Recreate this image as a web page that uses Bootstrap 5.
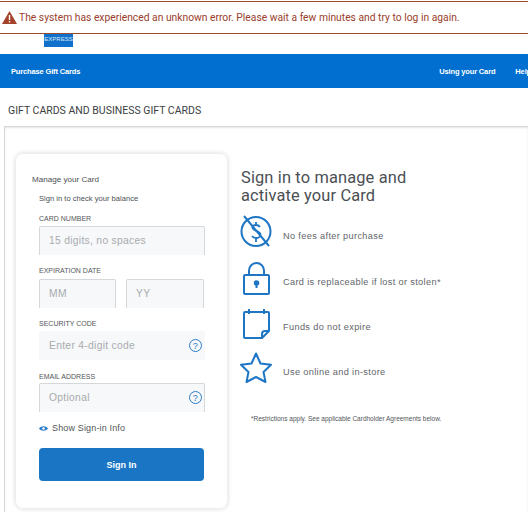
<!DOCTYPE html>
<html lang="en">
<head>
    <meta charset="UTF-8">
    <title>Gift Cards</title>
    <link href="https://cdn.jsdelivr.net/npm/bootstrap@5.3.0/dist/css/bootstrap.min.css" rel="stylesheet">
    <style>
        html, body { height: 512px; overflow: hidden; }
        body { font-family: "Open Sans", "Liberation Sans", sans-serif; background: #fff; color: #53565a; }
        .err-bar {
            margin-top: 1px; height: 33px; padding-left: 2px;
            border-top: 1px solid #9c4a2c; border-bottom: 1px solid #9c4a2c;
            color: #9a3d2c; font-family: Roboto, sans-serif; font-size: 10.3px; gap: 2px; white-space: nowrap;
        }
        .logo-strip { height: 20px; padding-left: 44px; }
        .logo-box {
            width: 29px; height: 13px; background: #0f71cc; color: #dce9f7;
            font: 6px/1 "Liberation Sans", sans-serif; text-align: center; padding-top: 2px;
        }
        .blue-nav {
            height: 34px; background: #006fcf; color: #fff; padding-left: 11px;
            font: 700 7.5px "Liberation Sans", sans-serif; white-space: nowrap; letter-spacing: -.15px;
        }
        .blue-nav .nav-right { gap: 20px; margin-right: -3px; }
        .page-title { height: 38px; padding: 16px 0 0 8px; font: 10.5px/14px Roboto, sans-serif; color: #3c4043; }
        .outer-panel {
            height: 386px; margin-left: 4px; padding: 26px 0 0 10px; gap: 12px;
            border-top: 1px solid #d8d8d8; border-left: 1px solid #d8d8d8;
            box-shadow: inset 0 1px 2px rgba(0,0,0,.1);
        }
        .login-box {
            width: 213px; height: 356px; flex: none; padding: 21px 23px 0 23px;
            border: 1px solid #eee; border-radius: 8px; box-shadow: 0 0 4px rgba(0,0,0,.14);
            font-family: "Liberation Sans", sans-serif;
        }
        .box-lead { font-size: 8.1px; line-height: 10px; margin-left: -7px; color: #4b4f54; }
        .box-sub { font-size: 7.6px; line-height: 10px; margin-top: 9px; color: #4b4f54; }
        .fld-label { display: block; margin: 0 0 3px; font-size: 7px; line-height: 9px; color: #53565a; text-transform: uppercase; }
        .fld {
            position: relative; height: 29px; background: #f7f8f9; border: 1px solid #d5d8da; border-bottom: 0;
            border-radius: 2px 2px 0 0; padding: 0 9px; font: 10.3px/28px "Liberation Sans", sans-serif; color: #a7abae;
            letter-spacing: .3px;
        }
        .fld-flat { border-color: #f7f8f9; }
        .date-row { gap: 10px; }
        .q-icon { position: absolute; right: 1px; top: 6px; width: 15px; height: 15px; }
        .show-info { margin-top: 10px; font-size: 9px; line-height: 12px; gap: 4px; color: #53565a; letter-spacing: .15px; }
        .signin-btn {
            display: block; width: 165px; height: 33px; margin-top: 14px; padding: 0; border: 0; border-radius: 4px;
            background: #1a76c5; color: #fff; font: 700 9px "Liberation Sans", sans-serif;
        }
        .info-col { padding-top: 16px; width: 270px; }
        .info-head { font: 400 16.400px/18px Roboto, sans-serif; margin: 0 0 10px 1px; color: #4b4f54; letter-spacing: .15px; width: 190px; }
        .info-row { gap: 11px; font: 9.2px "Liberation Sans", sans-serif; letter-spacing: .35px; color: #62666a; }
        .info-row svg { flex: none; }
        .foot-note { margin: 32px 0 0 11px; font: 6.500px/8px "Liberation Sans", sans-serif; color: #53565a; white-space: nowrap; }
    </style>
</head>
<body>
    <!-- error message -->
    <div class="err-bar d-flex align-items-center">
        <svg width="15" height="13" viewBox="0 0 15 13"><path d="M7.5 0 15 13H0Z" fill="#a5432a"/><rect x="6.8" y="4" width="1.4" height="5" fill="#fff"/><rect x="6.8" y="10" width="1.4" height="1.4" fill="#fff"/></svg>
        <span>The system has experienced an unknown error. Please wait a few minutes and try to log in again.</span>
    </div>

    <div class="logo-strip"><div class="logo-box">EXPRESS</div></div>

    <nav class="blue-nav d-flex align-items-center justify-content-between">
        <span>Purchase Gift Cards</span>
        <div class="nav-right d-flex"><span>Using your Card</span><span>Help</span></div>
    </nav>

    <div class="page-title">GIFT CARDS AND BUSINESS GIFT CARDS</div>

    <div class="outer-panel d-flex">
        <form class="login-box">
            <div class="box-lead">Manage your Card</div>
            <div class="box-sub">Sign in to check your balance</div>

            <label class="fld-label" style="margin-top:10px">Card Number</label>
            <div class="fld" style="width:166px">15 digits, no spaces</div>

            <label class="fld-label" style="margin:11px 0 4px">Expiration Date</label>
            <div class="d-flex date-row">
                <div class="fld" style="width:77px">MM</div>
                <div class="fld" style="width:78px">YY</div>
            </div>

            <label class="fld-label" style="margin-top:11px">Security Code</label>
            <div class="fld fld-flat" style="width:166px">Enter 4-digit code
                <svg class="q-icon" viewBox="0 0 15 15"><circle cx="7.5" cy="7.5" r="6" fill="none" stroke="#2a7bc8" stroke-width="1"/><text x="7.5" y="10.5" text-anchor="middle" font-size="9" fill="#2a7bc8">?</text></svg>
            </div>

            <label class="fld-label" style="margin:12px 0 2px">Email Address</label>
            <div class="fld" style="width:166px">Optional
                <svg class="q-icon" viewBox="0 0 15 15"><circle cx="7.5" cy="7.5" r="6" fill="none" stroke="#2a7bc8" stroke-width="1"/><text x="7.5" y="10.5" text-anchor="middle" font-size="9" fill="#2a7bc8">?</text></svg>
            </div>

            <div class="show-info d-flex align-items-center">
                <svg width="9" height="7" viewBox="0 0 9 7"><path d="M0 3.5C2 .5 7 .5 9 3.5 7 6.5 2 6.500 0 3.500Z" fill="#2a7bc8"/><circle cx="4.500" cy="3.500" r="1.300" fill="#fff"/></svg>
                <span>Show Sign-in Info</span>
            </div>
            <button type="button" class="signin-btn">Sign In</button>
        </form>

        <div class="info-col">
            <h2 class="info-head">Sign in to manage and activate your Card</h2>

            <div class="info-row d-flex align-items-center" style="height:32px">
                <svg width="32" height="32" viewBox="0 0 32 32" fill="none" stroke="#1f76c4" stroke-width="2"><circle cx="16" cy="16.500" r="14.500"/><path d="M4 1 29 31"/><path d="M20 12c-1-1.500-2.500-2-4-2-2.500 0-4 1.500-3.500 3 .7 3 7.500 3 8 6.500 0 2-2 3.500-4.500 3.500-1.500 0-3-.5-4-2M16 7v3M16 24v3" stroke-width="1.800"/></svg>
                <span style="padding-top:9px">No fees after purchase</span>
            </div>
            <div class="info-row d-flex align-items-center" style="height:33px;margin-top:15px">
                <svg width="32" height="33" viewBox="0 0 32 33" fill="none" stroke="#1f76c4" stroke-width="2"><rect x="4" y="13" width="25" height="19" rx="1"/><path d="M9 13V8.500a7.500 7.500 0 0 1 15 0V13"/><circle cx="16.500" cy="21" r="1.800" fill="#1f76c4"/><path d="M16.500 21v5"/></svg>
                <span style="padding-top:6px">Card is replaceable if lost or stolen*</span>
            </div>
            <div class="info-row d-flex align-items-center" style="height:30px;margin-top:14px">
                <svg width="32" height="30" viewBox="0 0 32 30" fill="none" stroke="#1f76c4" stroke-width="2" stroke-linejoin="round"><path d="M22 29H5a1 1 0 0 1-1-1V4a1 1 0 0 1 1-1h23a1 1 0 0 1 1 1v18Z"/><path d="M9 0v5M24 0v5"/><path d="M22 29v-4a3 3 0 0 1 3-3h4"/></svg>
                <span style="padding-top:6px">Funds do not expire</span>
            </div>
            <div class="info-row d-flex align-items-center" style="height:31px;margin-top:13px">
                <svg width="32" height="31" viewBox="0 0 32 31" fill="none" stroke="#1f76c4" stroke-width="2" stroke-linejoin="round"><path d="M16 1.500 20.500 11.500 31 12.800 23.500 20 25.500 30 16 25 6.500 30 8.500 20 1 12.800 11.500 11.500Z"/></svg>
                <span style="padding-top:8px">Use online and in-store</span>
            </div>
            <p class="foot-note">*Restrictions apply. See applicable Cardholder Agreements below.</p>
        </div>
    </div>

    <script src="https://cdn.jsdelivr.net/npm/bootstrap@5.3.0/dist/js/bootstrap.bundle.min.js"></script>
</body>
</html>
